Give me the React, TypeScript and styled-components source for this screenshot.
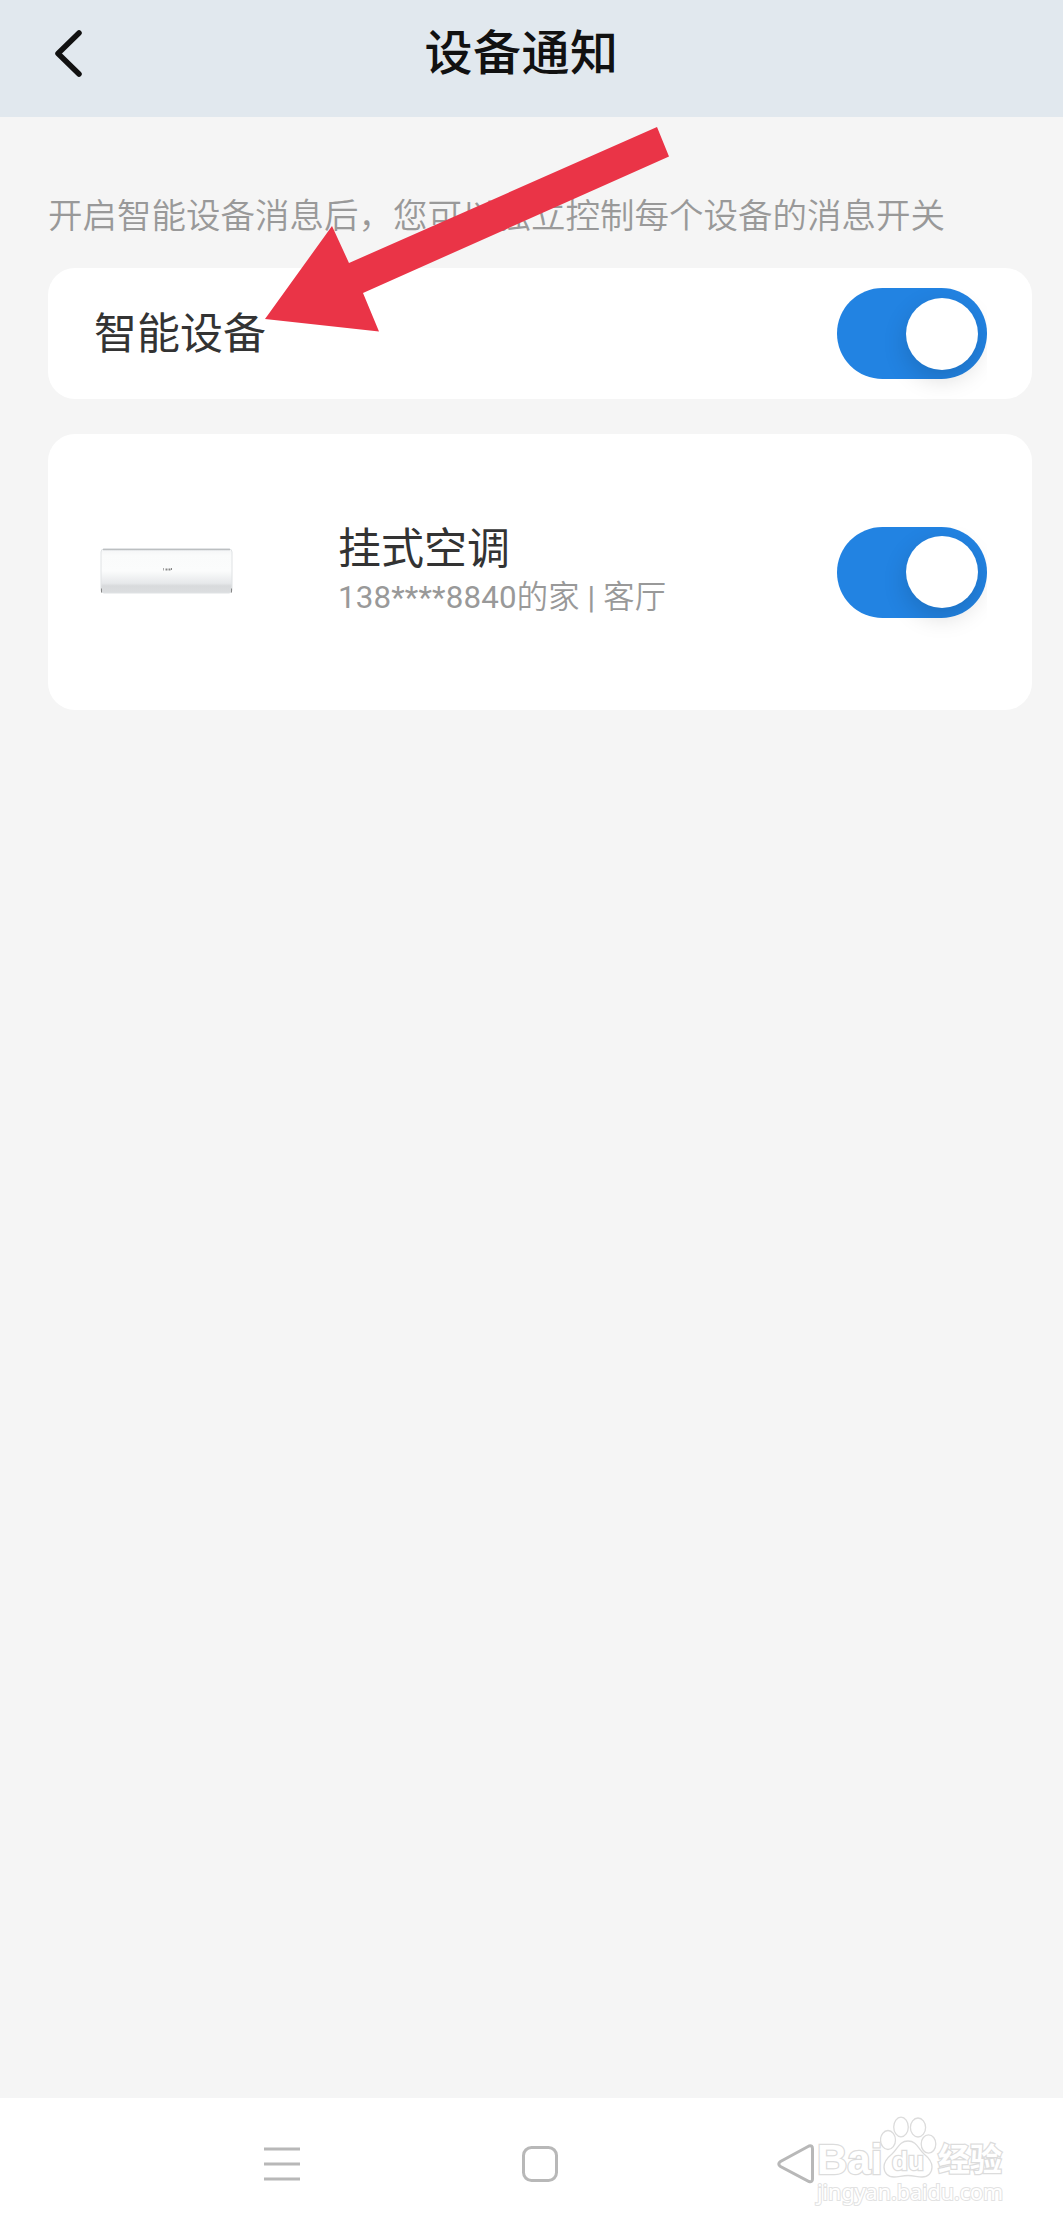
import React from "react";
import styled, { createGlobalStyle } from "styled-components";

const cjk = `Roboto, "Noto Sans CJK SC", sans-serif`;

const GlobalStyle = createGlobalStyle`
  body { margin: 0; background: #f5f5f5; }
  * { box-sizing: border-box; }
`;

const Screen = styled.div`
  position: relative;
  display: flex;
  flex-direction: column;
  width: 1063px;
  height: 2230px;
  overflow: hidden;
  background: #f5f5f5;
  font-family: ${cjk};
`;

const Header = styled.header`
  display: grid;
  grid-template-columns: 120px 1fr 140px;
  height: 117px;
  padding: 18px 0 29px;
  background: #e1e8ee;
`;

const BackButton = styled.button`
  display: flex;
  align-items: center;
  padding: 0 0 0 52px;
  border: 0;
  background: none;
`;

const Title = styled.h1`
  margin: 0;
  text-align: center;
  color: #111;
  font-size: 48px;
  line-height: 72px;
  font-weight: 500;
  letter-spacing: 0.5px;
`;

const Content = styled.main`
  display: flex;
  flex-direction: column;
  flex: 1;
  padding: 74px 31px 0 48px;
`;

const Hint = styled.p`
  margin: 0;
  height: 77px;
  color: #999;
  font-size: 34.5px;
  line-height: 50px;
  font-weight: 350;
  white-space: nowrap;
`;

const Card = styled.section<{ $height: number; $gap?: number }>`
  display: flex;
  align-items: center;
  height: ${(p) => p.$height}px;
  margin-top: ${(p) => p.$gap ?? 0}px;
  padding: 0 45px 0 46px;
  border-radius: 27px;
  background: #fff;
`;

const Label = styled.div`
  color: #333;
  font-size: 43px;
  line-height: 50px;
`;

const Details = styled.div`
  display: flex;
  flex-direction: column;
  margin-left: 105px;
`;

const Place = styled.div`
  color: #999;
  font-size: 31.3px;
  font-weight: 350;
  letter-spacing: 0.15px;
  line-height: 47px;
  white-space: nowrap;
`;

const Latin = styled.span`
  font-weight: 400;
`;

const Track = styled.button`
  display: flex;
  align-items: center;
  justify-content: flex-end;
  width: 150px;
  height: 91px;
  margin-left: auto;
  padding: 0 9px 0 0;
  border: 0;
  border-radius: 46px;
  background: #2283e2;
  clip-path: inset(0 0 -30px 0);
`;

const Knob = styled.span`
  width: 72px;
  height: 72px;
  border-radius: 50%;
  background: #fff;
  box-shadow: 0 9px 24px rgba(0, 0, 0, 0.15);
`;

const NavBar = styled.nav`
  display: grid;
  grid-template-columns: 258px 255px 1fr;
  align-items: center;
  height: 132px;
  padding-left: 263px;
  background: #fff;
`;

const Arrow = styled.svg`
  position: absolute;
  left: 255px;
  top: 115px;
`;

const Watermark = styled.div`
  position: absolute;
  left: 817px;
  top: 2114px;
  width: 192px;
  color: #fff;
`;

const Brand = styled.div`
  display: grid;
  grid-template-columns: 63px 58px auto;
  align-items: start;
  height: 65px;
`;

const Outlined = styled.span<{ $size: number; $line: number; $top?: number }>`
  display: block;
  margin-top: ${(p) => p.$top ?? 0}px;
  font-family: "Liberation Sans", "Noto Sans CJK SC", sans-serif;
  font-size: ${(p) => p.$size}px;
  line-height: ${(p) => p.$line}px;
  font-weight: 700;
  -webkit-text-stroke: 2.5px #dcdcdc;
  paint-order: stroke fill;
  white-space: nowrap;
`;

const Paw = styled.div`
  position: relative;
  width: 58px;
  height: 65px;
`;

const PawText = styled.div`
  position: absolute;
  left: 12px;
  top: 34px;
`;

const Site = styled.div`
  font-family: "Noto Sans", sans-serif;
  font-size: 21.5px;
  line-height: 26px;
  -webkit-text-stroke: 2px #e2e2e2;
  paint-order: stroke fill;
  white-space: nowrap;
`;

const Switch = () => (
  <Track role="switch" aria-checked="true">
    <Knob />
  </Track>
);

const AirConditioner = () => (
  <svg width="139" height="52" viewBox="94 545.500 139 52">
    <defs>
      <linearGradient id="shell" x1="0" y1="0" x2="0" y2="1">
        <stop offset="0" stopColor="#f4f5f6" />
        <stop offset="0.15" stopColor="#fafbfb" />
        <stop offset="0.5" stopColor="#fbfcfc" />
        <stop offset="0.78" stopColor="#e6e8ea" />
        <stop offset="0.84" stopColor="#d8dadc" />
        <stop offset="1" stopColor="#dcdee0" />
      </linearGradient>
    </defs>
    <rect x="101" y="548.5" width="131" height="44" rx="3" fill="url(#shell)" stroke="#dfe2e4" />
    <path d="M103 549h127" stroke="#bcbfc1" strokeWidth="1.5" />
    <path d="M101.500 588v4M231.500 588v4" stroke="#888" />
    <path d="M163.500 567.500v2.500" stroke="#aaa" />
    <path d="M165.500 569h2M168.500 569h2M171 568.500h1" stroke="#888" strokeWidth="2" />
  </svg>
);

export default function App() {
  return (
    <Screen>
      <GlobalStyle />
      <Header>
        <BackButton aria-label="返回">
          <svg width="32" height="50" viewBox="0 0 32 50" fill="none">
            <path d="M27 4 L6 24.500 L27 45" stroke="#111" strokeWidth="5.5" strokeLinecap="round" strokeLinejoin="round" />
          </svg>
        </BackButton>
        <Title>设备通知</Title>
      </Header>
      <Content>
        <Hint>开启智能设备消息后，您可以独立控制每个设备的消息开关</Hint>
        <Card $height={131}>
          <Label>智能设备</Label>
          <Switch />
        </Card>
        <Card $height={276} $gap={35}>
          <AirConditioner />
          <Details>
            <Label>挂式空调</Label>
            <Place><Latin>138****8840</Latin>的家<Latin> | </Latin>客厅</Place>
          </Details>
          <Switch />
        </Card>
      </Content>
      <NavBar>
        <svg width="38" height="38" viewBox="0 0 38 38" stroke="#b8b8b8" strokeWidth="3">
          <path d="M1 4h36M1 19h36M1 34h36" />
        </svg>
        <svg width="38" height="38" viewBox="0 0 38 38" fill="none" stroke="#b8b8b8" strokeWidth="3">
          <rect x="2.500" y="2.500" width="33" height="33" rx="8" />
        </svg>
        <svg width="40" height="42" viewBox="0 0 40 42" fill="none" stroke="#b8b8b8" strokeWidth="3">
          <path d="M33 3 L4.500 18.500 Q1 21 4.500 23.500 L33 38.500 Q36.500 39.500 36.500 36 V6 Q36.500 2 33 3Z" />
        </svg>
      </NavBar>
      <Watermark>
        <Brand>
          <Outlined $size={42} $line={36} $top={28}>Bai</Outlined>
          <Paw>
            <svg width="58" height="65" viewBox="0 0 58 65" fill="#fff" stroke="#dcdcdc" strokeWidth="1.3">
              <ellipse cx="8" cy="26" rx="7.500" ry="9.500" />
              <ellipse cx="21" cy="13" rx="7.300" ry="9.800" />
              <ellipse cx="38" cy="13.500" rx="7.600" ry="9.500" />
              <ellipse cx="48.500" cy="30" rx="7.300" ry="9.200" />
              <path d="M28 27c-9 0-10 8-16 13-5 4-8 8-8 13 0 6 4 10 10 10 5 0 8-1.500 14-1.500s9 1.500 14 1.500c6 0 10-4 10-10 0-5-3-9-8-13-6-5-7-13-16-13z" />
            </svg>
            <PawText>
              <Outlined $size={26} $line={26}>du</Outlined>
            </PawText>
          </Paw>
          <Outlined $size={32} $line={36} $top={28}>经验</Outlined>
        </Brand>
        <Site>jingyan.baidu.com</Site>
      </Watermark>
      <Arrow width="420" height="225" viewBox="255 115 420 225">
        <path d="M657 127L669 156.500L363 293L379 331.500L265 319L332 226L349 263Z" fill="#ea3447" />
      </Arrow>
    </Screen>
  );
}
